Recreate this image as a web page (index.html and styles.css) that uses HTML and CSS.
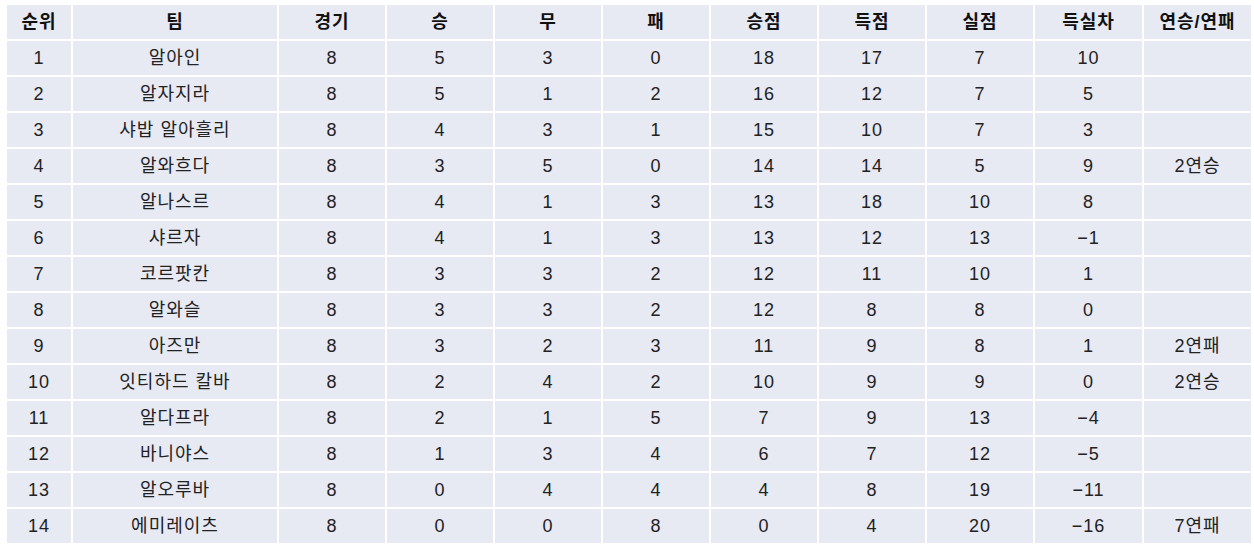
FILE: index.html
```html
<!DOCTYPE html>
<html lang="ko">
<head>
<meta charset="utf-8">
<title>순위표</title>
<link rel="stylesheet" href="styles.css">
</head>
<body>
<table class="standings">
<colgroup>
<col class="c-rank"><col class="c-team"><col class="c-n"><col class="c-n"><col class="c-n"><col class="c-n"><col class="c-n"><col class="c-n"><col class="c-n"><col class="c-n7"><col class="c-n7">
</colgroup>
<thead>
<tr><th>순위</th><th>팀</th><th>경기</th><th>승</th><th>무</th><th>패</th><th>승점</th><th>득점</th><th>실점</th><th>득실차</th><th>연승/연패</th></tr>
</thead>
<tbody>
<tr><td>1</td><td>알아인</td><td>8</td><td>5</td><td>3</td><td>0</td><td>18</td><td>17</td><td>7</td><td>10</td><td></td></tr>
<tr><td>2</td><td>알자지라</td><td>8</td><td>5</td><td>1</td><td>2</td><td>16</td><td>12</td><td>7</td><td>5</td><td></td></tr>
<tr><td>3</td><td>샤밥 알아흘리</td><td>8</td><td>4</td><td>3</td><td>1</td><td>15</td><td>10</td><td>7</td><td>3</td><td></td></tr>
<tr><td>4</td><td>알와흐다</td><td>8</td><td>3</td><td>5</td><td>0</td><td>14</td><td>14</td><td>5</td><td>9</td><td>2연승</td></tr>
<tr><td>5</td><td>알나스르</td><td>8</td><td>4</td><td>1</td><td>3</td><td>13</td><td>18</td><td>10</td><td>8</td><td></td></tr>
<tr><td>6</td><td>샤르자</td><td>8</td><td>4</td><td>1</td><td>3</td><td>13</td><td>12</td><td>13</td><td>−1</td><td></td></tr>
<tr><td>7</td><td>코르팟칸</td><td>8</td><td>3</td><td>3</td><td>2</td><td>12</td><td>11</td><td>10</td><td>1</td><td></td></tr>
<tr><td>8</td><td>알와슬</td><td>8</td><td>3</td><td>3</td><td>2</td><td>12</td><td>8</td><td>8</td><td>0</td><td></td></tr>
<tr><td>9</td><td>아즈만</td><td>8</td><td>3</td><td>2</td><td>3</td><td>11</td><td>9</td><td>8</td><td>1</td><td>2연패</td></tr>
<tr><td>10</td><td>잇티하드 칼바</td><td>8</td><td>2</td><td>4</td><td>2</td><td>10</td><td>9</td><td>9</td><td>0</td><td>2연승</td></tr>
<tr><td>11</td><td>알다프라</td><td>8</td><td>2</td><td>1</td><td>5</td><td>7</td><td>9</td><td>13</td><td>−4</td><td></td></tr>
<tr><td>12</td><td>바니야스</td><td>8</td><td>1</td><td>3</td><td>4</td><td>6</td><td>7</td><td>12</td><td>−5</td><td></td></tr>
<tr><td>13</td><td>알오루바</td><td>8</td><td>0</td><td>4</td><td>4</td><td>4</td><td>8</td><td>19</td><td>−11</td><td></td></tr>
<tr><td>14</td><td>에미레이츠</td><td>8</td><td>0</td><td>0</td><td>8</td><td>0</td><td>4</td><td>20</td><td>−16</td><td>7연패</td></tr>
</tbody>
</table>
</body>
</html>
```
FILE: styles.css
```css
html, body {
  margin: 0;
  padding: 0;
  background: #ffffff;
}

body {
  font-family: "Liberation Sans", "Noto Sans CJK KR", sans-serif;
  color: #222222;
}

.standings {
  margin: 3px 0 0 5px;
  border-collapse: separate;
  border-spacing: 2px;
  table-layout: fixed;
  width: 1247px;
}

.c-rank { width: 64px; }
.c-team { width: 204px; }
.c-n { width: 106px; }
.c-n7 { width: 107px; }

.standings th,
.standings td {
  background: #e7e9f3;
  height: 34px;
  padding: 0;
  text-align: center;
  vertical-align: middle;
  font-size: 18px;
  line-height: 20px;
  letter-spacing: 1px;
  white-space: nowrap;
}

.standings th {
  font-weight: bold;
  color: #111111;
}

.standings td {
  font-weight: normal;
}
```
